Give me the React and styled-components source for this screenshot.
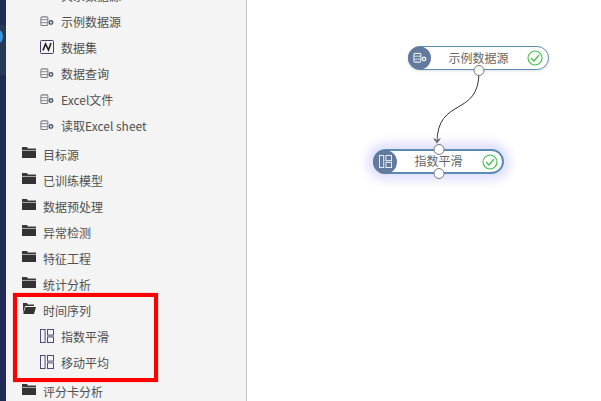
import React from "react";
import styled, { createGlobalStyle } from "styled-components";

const Global = createGlobalStyle`
  html, body {
    margin: 0;
    padding: 0;
    background: #fff;
  }
  body {
    font-family: "Noto Sans CJK SC", "Open Sans", sans-serif;
  }
`;

const Page = styled.div`
  width: 601px;
  height: 401px;
  display: flex;
  overflow: hidden;
`;

const Rail = styled.div`
  width: 6px;
  flex-shrink: 0;
  background: #1f2a56;
  position: relative;
`;

const RailBand = styled.div`
  height: 50px;
  margin-top: 25px;
  background: #263a56;
`;

const RailDot = styled.span`
  position: absolute;
  left: -5px;
  top: 30px;
  width: 8px;
  height: 13px;
  border-radius: 50%;
  background: #3c93dc;
`;

const Sidebar = styled.div`
  width: 240px;
  flex-shrink: 0;
  background: #f4f4f4;
  border-right: 1px solid #c4c4c4;
  overflow: hidden;
`;

const List = styled.div`
  margin-top: -18px;
  padding-left: 9px;
`;

const Group = styled.div`
  margin-top: 3px;
`;

const Row = styled.div`
  height: 26px;
  display: flex;
  align-items: center;
  color: #505050;
  font-size: 12px;
  white-space: nowrap;
  padding-left: ${(p) => (p.$child ? "25px" : "7px")};
`;

const IconSlot = styled.span`
  width: 21px;
  display: flex;
  align-items: center;
  flex-shrink: 0;
  margin-bottom: ${(p) => (p.$raised ? "3px" : "0")};
`;

const Highlight = styled.div`
  position: relative;
  &::after {
    content: "";
    position: absolute;
    left: -2px;
    top: -4px;
    width: 145px;
    height: 89px;
    box-sizing: border-box;
    border: 4px solid #ff0000;
    box-shadow: 0 0 1px #ff6666;
    pointer-events: none;
  }
`;

const Canvas = styled.div`
  flex: 1;
  position: relative;
  background: #fff;
`;

const Node = styled.div`
  position: absolute;
  left: ${(p) => p.$x}px;
  top: ${(p) => p.$y}px;
  width: ${(p) => p.$w}px;
  height: ${(p) => p.$h}px;
  box-sizing: border-box;
  background: #fff;
  border: ${(p) => (p.$active ? "2px" : "1px")} solid #5b8db4;
  border-radius: 13px;
  display: flex;
  align-items: center;
  justify-content: center;
  color: #666;
  font-size: 12px;
  padding-bottom: 2px;
  box-shadow: ${(p) =>
    p.$active ? "0 0 10px 7px #e2e2fe" : "0 1px 3px rgba(0,0,0,.12)"};
`;

const Badge = styled.span`
  position: absolute;
  left: ${(p) => (p.$active ? "-2px" : "-1px")};
  top: 50%;
  transform: translateY(-50%);
  width: ${(p) => p.$size}px;
  height: ${(p) => p.$size}px;
  border-radius: 50%;
  background: #627a9d;
  display: flex;
  align-items: center;
  justify-content: center;
`;

const Check = styled.span`
  position: absolute;
  right: ${(p) => (p.$active ? "4px" : "5px")};
  top: 50%;
  transform: translateY(-50%);
  display: flex;
`;

const Port = styled.span`
  position: absolute;
  left: 50%;
  ${(p) => (p.$top ? "top: -7px;" : "bottom: -7px;")}
  transform: translateX(-50%);
  width: 9px;
  height: 9px;
  border: 1px solid #777;
  border-radius: 50%;
  background: #fff;
`;

const Wire = styled.svg`
  position: absolute;
  left: 0;
  top: 0;
  pointer-events: none;
`;

const Folder = ({ open }) =>
  open ? (
    <svg width="14" height="13" viewBox="0 0 14 13">
      <path d="M1 1h4l1 1.5h6V4H3.2L1 11z" fill="#3a3a3a" />
      <path d="M3.6 5H14l-2 7H1.2z" fill="#333" />
    </svg>
  ) : (
    <svg width="14" height="13" viewBox="0 0 14 13">
      <path d="M0 1h5l1 1.5h8V4H0z" fill="#3a3a3a" />
      <rect x="0" y="4.6" width="14" height="7.4" fill="#333" />
    </svg>
  );

const DataIcon = ({ color = "#7d7d8a", dot = "#4a5a6a", size = 14 }) => (
  <svg width={size} height={size * 0.75} viewBox="0 0 16 12" fill="none">
    <rect x="1" y="1" width="8" height="10" rx="1.5" stroke={color} strokeWidth="1.2" />
    <path d="M1 4.2h8M1 7.6h8" stroke={color} strokeWidth="1" />
    <circle cx="12.6" cy="7.4" r="2" stroke={dot} strokeWidth="1.6" />
  </svg>
);

const ChartIcon = () => (
  <svg width="14" height="14" viewBox="0 0 14 14" fill="none">
    <rect x="0.5" y="0.5" width="13" height="13" rx="1" stroke="#4a3a6a" />
    <path d="M3 10.5 5.5 4l3 6 2.5-7" stroke="#222" strokeWidth="1.6" />
  </svg>
);

const LayoutIcon = ({ color = "#4f4a78", size = 14 }) => (
  <svg width={size} height={size} viewBox="0 0 14 14" fill="none" stroke={color} strokeWidth="1">
    <rect x="0.5" y="0.5" width="4.6" height="13" />
    <rect x="7.5" y="0.5" width="6" height="5.6" />
    <rect x="7.5" y="7.9" width="6" height="5.6" />
  </svg>
);

const CheckIcon = () => (
  <svg width="16" height="16" viewBox="0 0 16 16" fill="none" stroke="#3fbf4a">
    <circle cx="8" cy="8" r="7" strokeWidth="1.1" />
    <path d="M4 8l3 3 5-6" strokeWidth="1.2" />
  </svg>
);

const top = [
  { icon: "data", label: "关系数据源" },
  { icon: "data", label: "示例数据源" },
  { icon: "chart", label: "数据集" },
  { icon: "data", label: "数据查询" },
  { icon: "data", label: "Excel文件" },
  { icon: "data", label: "读取Excel sheet" },
];

const folders = ["目标源", "已训练模型", "数据预处理", "异常检测", "特征工程", "统计分析"];

export default function App() {
  return (
    <Page>
      <Global />
      <Rail>
        <RailBand />
        <RailDot />
      </Rail>
      <Sidebar>
        <List>
          {top.map((t) => (
            <Row $child key={t.label}>
              <IconSlot>{t.icon === "chart" ? <ChartIcon /> : <DataIcon />}</IconSlot>
              {t.label}
            </Row>
          ))}
          <Group>
            {folders.map((f) => (
              <Row key={f}>
                <IconSlot $raised>
                  <Folder />
                </IconSlot>
                {f}
              </Row>
            ))}
            <Highlight>
              <Row>
                <IconSlot $raised>
                  <Folder open />
                </IconSlot>
                时间序列
              </Row>
              <Row $child>
                <IconSlot>
                  <LayoutIcon />
                </IconSlot>
                指数平滑
              </Row>
              <Row $child>
                <IconSlot>
                  <LayoutIcon />
                </IconSlot>
                移动平均
              </Row>
            </Highlight>
          </Group>
          <Group>
            <Row>
              <IconSlot $raised>
                <Folder />
              </IconSlot>
              评分卡分析
            </Row>
          </Group>
        </List>
      </Sidebar>
      <Canvas>
        <Wire width="354" height="401" fill="none">
          <path d="M232 72C232 118 190 96 190 143" stroke="#333" strokeWidth="1" />
          <path d="M186 138l4 6 4-6-4 2z" fill="#222" />
        </Wire>
        <Node $x={161} $y={46} $w={141} $h={24}>
          <Badge $size={23}>
            <DataIcon color="#e8ecf2" dot="#e8ecf2" />
          </Badge>
          示例数据源
          <Check>
            <CheckIcon />
          </Check>
          <Port />
        </Node>
        <Node $active $x={126} $y={149} $w={131} $h={25}>
          <Badge $active $size={24}>
            <LayoutIcon color="#f2f4f8" size={13} />
          </Badge>
          指数平滑
          <Check $active>
            <CheckIcon />
          </Check>
          <Port $top />
          <Port />
        </Node>
      </Canvas>
    </Page>
  );
}
